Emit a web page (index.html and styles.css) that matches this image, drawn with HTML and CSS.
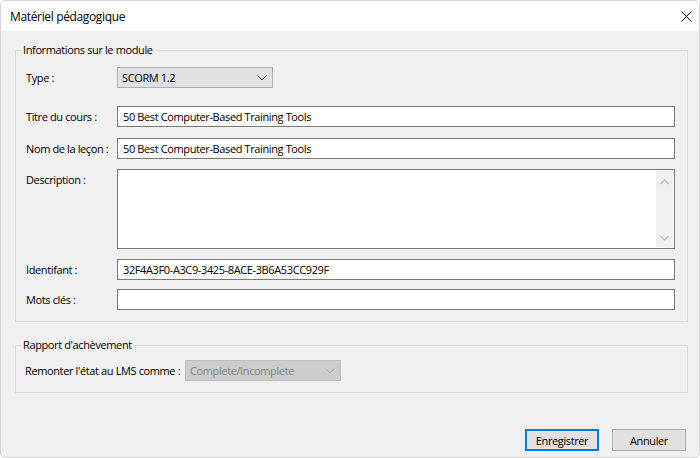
FILE: index.html
```html
<!DOCTYPE html>
<html lang="fr">
<head>
<meta charset="utf-8">
<title>Matériel pédagogique</title>
<link rel="stylesheet" href="styles.css">
</head>
<body>
<div class="window">
  <div class="titlebar">
    <span class="title">Matériel pédagogique</span>
    <svg class="close" width="11" height="11" viewBox="0 0 11 11"><path d="M0.5 0.5L10.5 10.5M10.5 0.5L0.5 10.5" stroke="#000" stroke-width="1"/></svg>
  </div>
  <div class="content">
    <fieldset class="group group-module">
      <legend>Informations sur le module</legend>
      <div class="row row-type">
        <span class="lbl">Type :</span>
        <div class="select">
          <span>SCORM 1.2</span>
          <svg class="chev" width="10" height="6" viewBox="0 0 10 6"><path d="M0.5 0.5L5 5L9.5 0.5" fill="none" stroke="#555" stroke-width="1"/></svg>
        </div>
      </div>
      <div class="row row-titre">
        <span class="lbl">Titre du cours :</span>
        <div class="input">50 Best Computer-Based Training Tools</div>
      </div>
      <div class="row row-nom">
        <span class="lbl">Nom de la leçon :</span>
        <div class="input">50 Best Computer-Based Training Tools</div>
      </div>
      <div class="row row-desc">
        <span class="lbl lbl-top">Description :</span>
        <div class="textarea">
          <div class="ta-body"></div>
          <div class="scrollbar">
            <svg width="9" height="6" viewBox="0 0 9 6"><path d="M0.5 5L4.5 1L8.5 5" fill="none" stroke="#c2c2c2" stroke-width="1.6"/></svg>
            <svg width="9" height="6" viewBox="0 0 9 6"><path d="M0.5 1L4.5 5L8.5 1" fill="none" stroke="#c2c2c2" stroke-width="1.6"/></svg>
          </div>
        </div>
      </div>
      <div class="row row-ident">
        <span class="lbl">Identifant :</span>
        <div class="input">32F4A3F0-A3C9-3425-8ACE-3B6A53CC929F</div>
      </div>
      <div class="row row-mots">
        <span class="lbl">Mots clés :</span>
        <div class="input"></div>
      </div>
    </fieldset>
    <fieldset class="group group-rapport">
      <legend>Rapport d'achèvement</legend>
      <div class="row row-lms">
        <span class="lbl lbl-lms">Remonter l'état au LMS comme :</span>
        <div class="select select-disabled">
          <span>Complete/Incomplete</span>
          <svg class="chev" width="10" height="6" viewBox="0 0 10 6"><path d="M0.5 0.5L5 5L9.5 0.5" fill="none" stroke="#b0b0b0" stroke-width="1"/></svg>
        </div>
      </div>
    </fieldset>
    <div class="footer">
      <button class="btn btn-default">Enregistrer</button>
      <button class="btn">Annuler</button>
    </div>
  </div>
</div>
</body>
</html>
```
FILE: styles.css
```css
* { box-sizing: border-box; }
html, body { margin: 0; padding: 0; background: #ffffff; }
body {
  font-family: "Open Sans", "Noto Sans", sans-serif;
  font-size: 11px;
  letter-spacing: -0.38px;
  color: #000;
}
.window {
  width: 700px;
  height: 458px;
  border: 1px solid #d6d6d6;
  border-radius: 5px;
  background: #f0f0f0;
  display: flex;
  flex-direction: column;
  overflow: hidden;
}
.titlebar {
  height: 30px;
  flex: none;
  background: #fff;
  display: flex;
  align-items: center;
  justify-content: space-between;
  padding: 0 7px 0 9px;
}
.title { font-size: 12px; letter-spacing: -0.35px; }
.close { display: block; }
.content {
  flex: 1;
  display: flex;
  flex-direction: column;
  padding: 0 11px 0 14px;
}
.group {
  margin: 0;
  border: 1px solid #dcdcdc;
  min-width: 0;
}
.group legend {
  padding: 0 2px;
  line-height: 16px;
  font-size: 11px;
  white-space: nowrap;
}
.group-module {
  margin-top: 11px;
  padding: 9px 12px 11px 10px;
}
.group-module legend { margin-left: -5px; }
.group-rapport {
  margin-top: 15px;
  padding: 7px 12px 11px 9px;
}
.group-rapport legend { margin-left: -4px; }
.row { display: flex; align-items: center; }
.lbl { width: 91px; flex: none; white-space: nowrap; }
.lbl-top { align-self: flex-start; padding-top: 3px; }
.lbl-lms { width: 160px; }
.row-titre { margin-top: 18px; }
.row-nom { margin-top: 11px; }
.row-desc { margin-top: 10px; }
.row-ident { margin-top: 10px; }
.row-mots { margin-top: 9px; }
.select {
  width: 156px;
  height: 21px;
  background: #e1e1e1;
  border: 1px solid #adadad;
  display: flex;
  align-items: center;
  justify-content: space-between;
  padding: 0 4px 0 4px;
  white-space: nowrap;
}
.select-disabled {
  background: #cccccc;
  border-color: #bfbfbf;
  color: #838383;
}
.chev { display: block; margin-right: 1px; }
.input {
  flex: 1;
  height: 21px;
  background: #fff;
  border: 1px solid #7a7a7a;
  display: flex;
  align-items: center;
  padding: 0 5px;
  white-space: nowrap;
}
.textarea {
  flex: 1;
  height: 80px;
  background: #fff;
  border: 1px solid #7a7a7a;
  display: flex;
  padding: 1px;
}
.ta-body { flex: 1; }
.scrollbar {
  width: 17px;
  background: #f0f0f0;
  display: flex;
  flex-direction: column;
  align-items: center;
  justify-content: space-between;
  padding: 8px 0 6px;
}
.scrollbar svg { display: block; }
.footer {
  margin-top: auto;
  display: flex;
  justify-content: flex-end;
  gap: 13px;
  padding: 0 2px 6px 0;
}
.btn {
  width: 74px;
  height: 22px;
  background: #e1e1e1;
  border: 1px solid #adadad;
  font-family: inherit;
  font-size: 11px;
  letter-spacing: -0.38px;
  color: #000;
  padding: 0;
  margin: 0;
}
.btn-default { border: 2px solid #0078d7; }
```
